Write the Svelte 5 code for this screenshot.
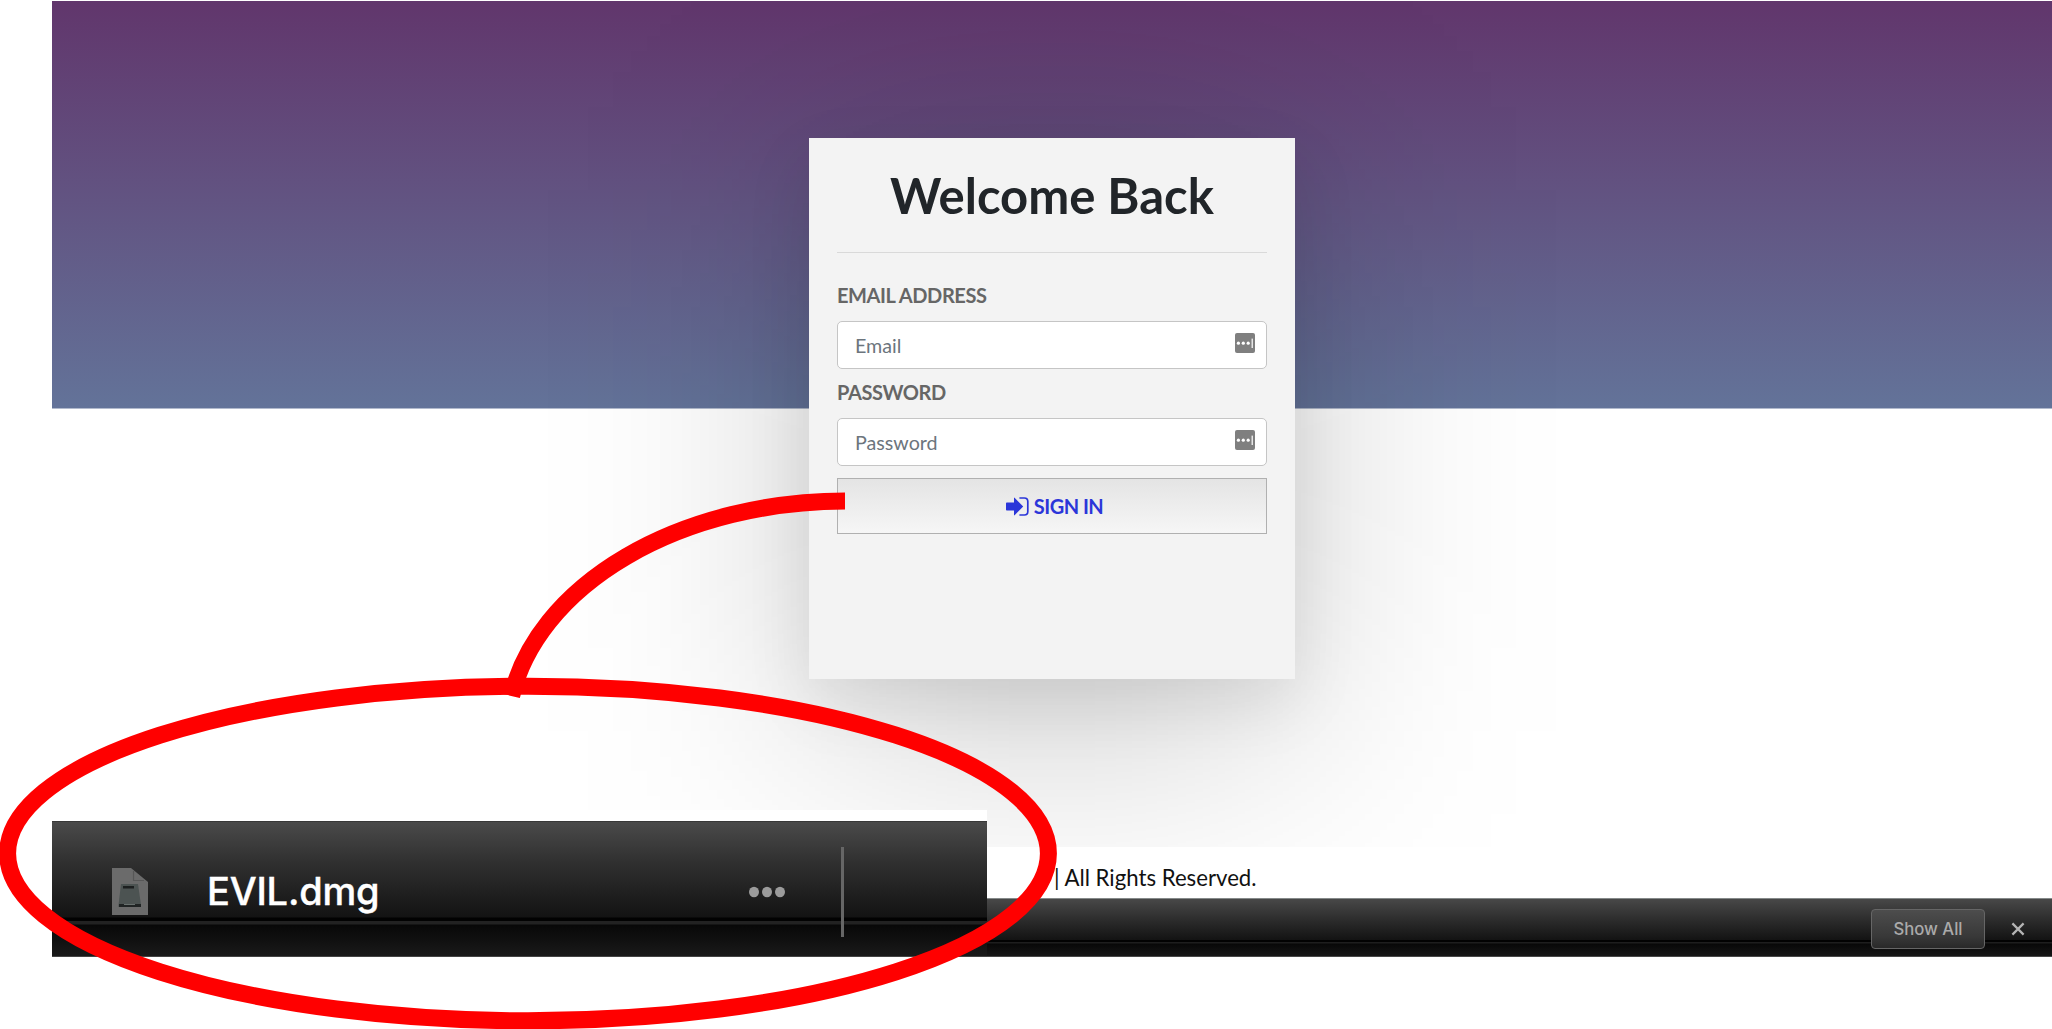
<script>
  const fields = [
    { id: 'email', label: 'EMAIL ADDRESS', placeholder: 'Email', type: 'email' },
    { id: 'password', label: 'PASSWORD', placeholder: 'Password', type: 'password' }
  ];
  const dots = [8, 21, 34];
</script>

<div class="screen">
  <div class="page">
    <main class="hero">
      <section class="card">
        <h1>Welcome Back</h1>
        <hr />
        <form>
          {#each fields as field}
            <label class={field.id} for={field.id}>{field.label}</label>
            <div class="field">
              <input id={field.id} type={field.type} placeholder={field.placeholder} />
              <svg class="manager" viewBox="0 0 20 20">
                <rect width="20" height="20" rx="2" fill="#7f7f7f" />
                <circle cx="3.4" cy="10.2" r="1.6" fill="#fff" />
                <circle cx="8.3" cy="10.2" r="1.6" fill="#fff" />
                <circle cx="13.2" cy="10.2" r="1.6" fill="#fff" />
                <rect x="16.6" y="5.6" width="1.2" height="9.4" fill="#fff" />
              </svg>
            </div>
          {/each}
          <button class="signin" type="button">
            <svg class="enter" viewBox="0 0 23 19">
              <path d="M.8 5.6H8V1.2Q8 .2 8.8 .9L17.2 9.5L8.8 18.1Q8 18.8 8 17.8V13.6H.8Q0 13.6 0 12.8V6.4Q0 5.6.8 5.6Z" fill="#2b36d9" />
              <path d="M13.4 1H18.3Q21.8 1 21.8 4.5V14.5Q21.8 18 18.3 18H13.4" fill="none" stroke="#2b36d9" stroke-width="1.7" />
            </svg>
            <span>SIGN IN</span>
          </button>
        </form>
      </section>
    </main>
    <footer>| All Rights Reserved.</footer>
    <div class="shelf">
      <button class="show" type="button">Show All</button>
      <svg class="close" viewBox="0 0 14 14"><path d="M1.4 1.4L12.6 12.6M12.6 1.4L1.4 12.6" stroke="#b4b4b4" stroke-width="2.2" /></svg>
    </div>
  </div>

  <div class="zoomed">
    <div class="download">
      <svg class="file" viewBox="0 0 36 47">
        <path d="M0 0H19L36 14V47H0Z" fill="#6b6b6b" />
        <path d="M21.5 3V12.5H32" fill="none" stroke="#575757" stroke-width="1.2" />
        <path d="M9 16H26L29 37V39H6.5V37Z" fill="#4c5352" />
        <path d="M11 18H22V20.5H11Z" fill="#1c1f1f" />
        <path d="M7 36H29V39H7Z" fill="#202424" />
        <path d="M12 36.5H23" stroke="#68706e" stroke-width="1" />
      </svg>
      <span class="name">EVIL.dmg</span>
      <svg class="more" viewBox="0 0 42 12">
        {#each dots as x}<ellipse cx={x} cy="6" rx="5" ry="5.2" fill="#9b9b9b" />{/each}
      </svg>
      <div class="divider"></div>
    </div>
  </div>

  <svg class="marks" viewBox="0 0 2052 1029">
    <ellipse cx="528" cy="853.5" rx="520.4" ry="167.3" />
    <path d="M845 501A338.9 232.6 0 0 0 511.6 696" />
  </svg>
</div>

<style>
  :global(body) { margin: 0; background: #fff; }
  .screen {
    position: relative;
    width: 2052px;
    height: 1029px;
    overflow: hidden;
    box-sizing: border-box;
    padding: 1px 0 0 52px;
    font-family: Lato, sans-serif;
    background: #fff;
  }
  .page { display: flex; flex-direction: column; }
  .hero {
    height: 846px;
    box-sizing: border-box;
    padding-top: 137px;
    overflow: hidden;
    isolation: isolate;
    display: flex;
    justify-content: center;
    align-items: flex-start;
    background: linear-gradient(#61366c, #637399) 0 0 / 100% 407.5px no-repeat;
  }
  .card {
    position: relative;
    width: 486px;
    height: 541px;
    box-sizing: border-box;
    padding: 28px 28px 0;
    background: #f3f3f3;
    box-shadow: 0 24px 64px rgba(0, 0, 0, 0.09);
  }
  /* wide soft shadow under the card */
  .card::before {
    content: '';
    position: absolute;
    inset: 0;
    z-index: -1;
    transform: translateY(52px);
    background: rgba(0, 0, 0, 0.2);
    filter: blur(125px);
  }
  h1 {
    margin: 0;
    font-size: 49px;
    line-height: 59px;
    font-weight: 700;
    text-align: center;
    color: #212529;
  }
  hr { height: 1px; margin: 27px 0; border: 0; background: #d9d9d9; }
  form { display: flex; flex-direction: column; }
  label {
    margin-bottom: 11px;
    font-size: 20px;
    line-height: 30px;
    font-weight: 700;
    letter-spacing: -0.4px;
    color: #666;
  }
  label.password { margin-top: 8px; }
  .field {
    height: 48px;
    box-sizing: border-box;
    display: flex;
    align-items: center;
    padding: 0 11px 0 17px;
    border: 1px solid #c5c5c5;
    border-radius: 5px;
    background: #fff;
  }
  input {
    flex: 1;
    min-width: 0;
    padding: 2px 0 0;
    border: 0;
    outline: 0;
    background: none;
    font: 400 19.7px/24px Lato, sans-serif;
  }
  input::placeholder { color: #6c757d; opacity: 1; }
  .manager { width: 20px; height: 20px; margin-bottom: 4px; }
  .signin {
    height: 56px;
    margin-top: 12px;
    padding: 0 0 0 5px;
    display: flex;
    align-items: center;
    justify-content: center;
    gap: 5px;
    border: 1.5px solid #b0b0b0;
    background: linear-gradient(#e4e4e4, #f6f6f6);
    color: #2b36d9;
    font: 700 20px/24px Lato, sans-serif;
    letter-spacing: -0.5px;
  }
  .enter { width: 23px; height: 19px; }
  footer {
    height: 51px;
    box-sizing: border-box;
    padding: 18px 0 0 1002px;
    font-size: 22.2px;
    line-height: 26px;
    color: #111;
    background: #fff;
  }
  .shelf {
    height: 58.5px;
    box-sizing: border-box;
    display: flex;
    align-items: center;
    justify-content: flex-end;
    gap: 26px;
    padding: 3px 27px 0 0;
    border-top: 1px solid #858989;
    border-bottom: 1px solid #484848;
    background: linear-gradient(#484848 0, #2c2c2c 21px, #131313 41px, #020202 41px, #020202 43px, #1e1e1e 43px, #1e1e1e 44px, #080808 45px, #161616 57px);
  }
  .show {
    width: 114px;
    height: 40px;
    padding: 0;
    border: 1px solid #666;
    border-radius: 4px;
    background: linear-gradient(#4d4d4d, #383838 70%, #292929);
    color: #aaa;
    font: 500 16.7px/20px Inter, sans-serif;
  }
  .close { width: 14px; height: 14px; }
  .zoomed {
    position: absolute;
    left: 52px;
    top: 810px;
    width: 935px;
    height: 146.5px;
    box-sizing: border-box;
    padding-top: 11px;
    background: #fff;
  }
  .download {
    height: 135.5px;
    box-sizing: border-box;
    display: flex;
    align-items: center;
    padding-left: 60px;
    border-top: 1px solid #383838;
    border-bottom: 1px solid #444;
    background: linear-gradient(#4a4a4a 0, #303030 40px, #131313 95px, #020202 96px, #020202 99px, #222 99px, #222 102px, #080808 103px, #191919 133px);
  }
  .file { width: 36px; height: 47px; margin: 5px 59px 0 0; }
  .name {
    width: 172px;
    font: 500 38px/46px Inter, sans-serif;
    letter-spacing: -0.2px;
    color: #fff;
    -webkit-text-stroke: 0.4px #fff;
    margin-top: 4px;
  }
  .more { width: 42px; height: 12px; margin: 6px 53px 0 367px; }
  .divider { width: 3px; height: 90px; margin-top: 6px; background: #666; }
  .marks {
    position: absolute;
    left: 0;
    top: 0;
    width: 2052px;
    height: 1029px;
    fill: none;
    stroke: #f00;
    stroke-width: 17;
    pointer-events: none;
  }
</style>
